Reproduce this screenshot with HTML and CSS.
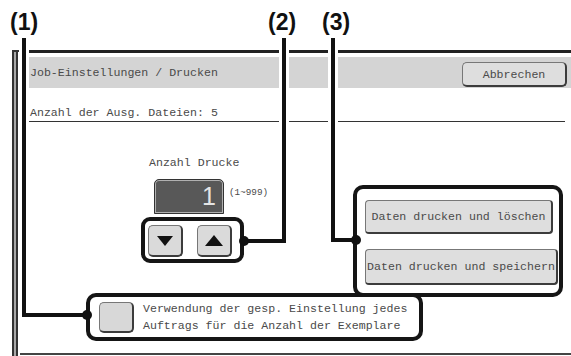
FILE: index.html
```html
<!DOCTYPE html>
<html lang="de">
<head>
  <meta charset="UTF-8">
  <title>Job-Einstellungen / Drucken</title>
  <link rel="stylesheet" href="styles.css">
</head>
<body>

<!-- Device screen -->
<div class="device">
  <div class="edge"></div>
  <div class="main">
    <div class="screen">
      <div class="header">
        <span class="header-title">Job-Einstellungen / Drucken</span>
        <button class="key key-cancel">Abbrechen</button>
      </div>
      <div class="info">Anzahl der Ausg. Dateien: 5</div>

      <div class="content">
        <div class="row">
          <div class="counter">
            <div class="counter-label">Anzahl Drucke</div>
            <div class="counter-row">
              <div class="counter-value">1</div>
              <span class="counter-range">(1~999)</span>
            </div>
            <div class="arrows callout">
              <button class="key arrow"><span class="tri-down"></span></button>
              <button class="key arrow"><span class="tri-up"></span></button>
            </div>
          </div>

          <div class="actions callout">
            <button class="key action">Daten drucken und löschen</button>
            <button class="key action action-wide">Daten drucken und speichern</button>
          </div>
        </div>

        <div class="option callout">
          <span class="key checkbox"></span>
          <p>Verwendung der gesp. Einstellung jedes<br>Auftrags für die Anzahl der Exemplare</p>
        </div>
      </div>
    </div>
  </div>
</div>

<!-- Callout markers -->
<div class="marker m1">(1)</div>
<div class="marker m2">(2)</div>
<div class="marker m3">(3)</div>

<div class="lead lead-v l1v"></div>
<div class="lead l1h"></div>
<div class="dot d1"></div>

<div class="lead lead-v l2v"></div>
<div class="lead l2h"></div>
<div class="dot d2"></div>

<div class="lead lead-v l3v"></div>
<div class="lead l3h"></div>
<div class="dot d3"></div>

</body>
</html>
```

FILE: styles.css
```css
* { margin: 0; padding: 0; box-sizing: border-box; }
html, body {
  width: 100%;
  height: 100%;
  background: #fff;
  overflow: hidden;
}
body {
  position: relative;
  font-family: "Liberation Mono", "Courier New", monospace;
  font-size: 11.6px;
  color: #4a4a4a;
}

/* screen frame */
.device {
  display: flex;
  margin: 50px 0 0 12px;
  height: 306px;
}
.edge {
  width: 8px;
  border-top: 2px solid #333;
  border-left: 2px solid #333;
  background: linear-gradient(to right, #a8a8a8 0 2px, #333 2px 4px, transparent 4px);
}
.main {
  flex: 1;
  height: 305px;
  padding-left: 9px;
  border-bottom: 2px solid #444;
}
.screen {
  border-top: 3px solid #222;
  padding-top: 4px;
}
.header {
  height: 31px;
  background: #d4d4d4;
  display: flex;
  justify-content: space-between;
  align-items: flex-end;
  padding: 0 4px 1px 1px;
}
.header-title { align-self: center; }
.info {
  padding: 17px 0 0 1px;
  line-height: 16px;
  border-bottom: 1px solid #333;
  margin-right: 6px;
}

/* keys */
.key {
  font: inherit;
  color: inherit;
  background: #dedede;
  border: 1px solid #777;
  border-right: 2px solid #3c3c3c;
  border-bottom: 2px solid #3c3c3c;
  border-radius: 4px;
}
.key-cancel {
  width: 105px;
  height: 25px;
  border-radius: 5px;
}

/* counter */
.row {
  display: flex;
  align-items: flex-start;
}
.counter {
  width: 103px;
  margin: 33px 0 0 112px;
  display: flex;
  flex-direction: column;
  align-items: flex-start;
}
.counter-label {
  margin-left: 8px;
  line-height: 16px;
  white-space: nowrap;
}
.counter-row {
  display: flex;
  align-items: flex-start;
  margin: 8px 0 0 13px;
}
.counter-value {
  width: 70px;
  height: 35px;
  background: #585858;
  border: 1px solid #333;
  box-shadow: inset 0 0 0 1px #b0b0b0;
  border-radius: 5px 5px 0 0;
  color: #e4e4e4;
  font-family: "Liberation Sans", Arial, sans-serif;
  font-size: 25px;
  line-height: 33px;
  text-align: right;
  padding-right: 7px;
}
.counter-range {
  font-size: 9.3px;
  margin: 8px 0 0 5px;
  white-space: nowrap;
}

.callout {
  border: 4px solid #151515;
  border-radius: 10px;
  background: #fff;
}
.arrows {
  display: flex;
  gap: 14px;
  padding: 4px 8px 2px 3px;
  margin-top: 3px;
  border-radius: 9px;
}
.arrow {
  width: 35px;
  height: 32px;
  display: flex;
  align-items: center;
  justify-content: center;
  background: #dadada;
  border-radius: 5px;
}
.tri-down {
  border-left: 8px solid transparent;
  border-right: 8px solid transparent;
  border-top: 10px solid #111;
}
.tri-up {
  border-left: 9px solid transparent;
  border-right: 9px solid transparent;
  border-bottom: 11px solid #111;
}

/* print actions */
.actions {
  width: 210px;
  height: 112px;
  margin: 63px 0 0 109px;
  padding: 11px 0 0 8px;
  display: flex;
  flex-direction: column;
  align-items: flex-start;
  gap: 15px;
}
.action {
  width: 188px;
  height: 34px;
  white-space: nowrap;
}
.action-wide {
  width: 193px;
  height: 36px;
}

/* stored setting option */
.option {
  width: 337px;
  height: 48px;
  margin: -4px 0 0 57px;
  display: flex;
  align-items: center;
}
.checkbox {
  display: block;
  width: 35px;
  height: 31px;
  margin-left: 9px;
  background: #d8d8d8;
  border-radius: 5px;
}
.option p {
  margin-left: 9px;
  line-height: 17px;
  white-space: nowrap;
}

/* callout markers and leader lines */
.marker {
  position: absolute;
  top: 9px;
  font: bold 23px/26px "Liberation Sans", Arial, sans-serif;
  color: #111;
}
.m1 { left: 10px; }
.m2 { left: 268px; }
.m3 { left: 322px; }

.lead {
  position: absolute;
  background: #111;
  height: 4px;
}
.lead-v {
  width: 4px;
  box-shadow: 0 0 0 3px #fff;
}
.dot {
  position: absolute;
  width: 10px;
  height: 10px;
  border-radius: 50%;
  background: #111;
}
.l1v { left: 22px; top: 38px; height: 279px; }
.l1h { left: 22px; top: 313px; width: 64px; }
.d1 { left: 82px; top: 310px; }

.l2v { left: 282px; top: 38px; height: 205px; }
.l2h { left: 244px; top: 239px; width: 40px; }
.d2 { left: 239px; top: 236px; }

.l3v { left: 331px; top: 38px; height: 204px; }
.l3h { left: 331px; top: 238px; width: 25px; }
.d3 { left: 351px; top: 235px; }
```
